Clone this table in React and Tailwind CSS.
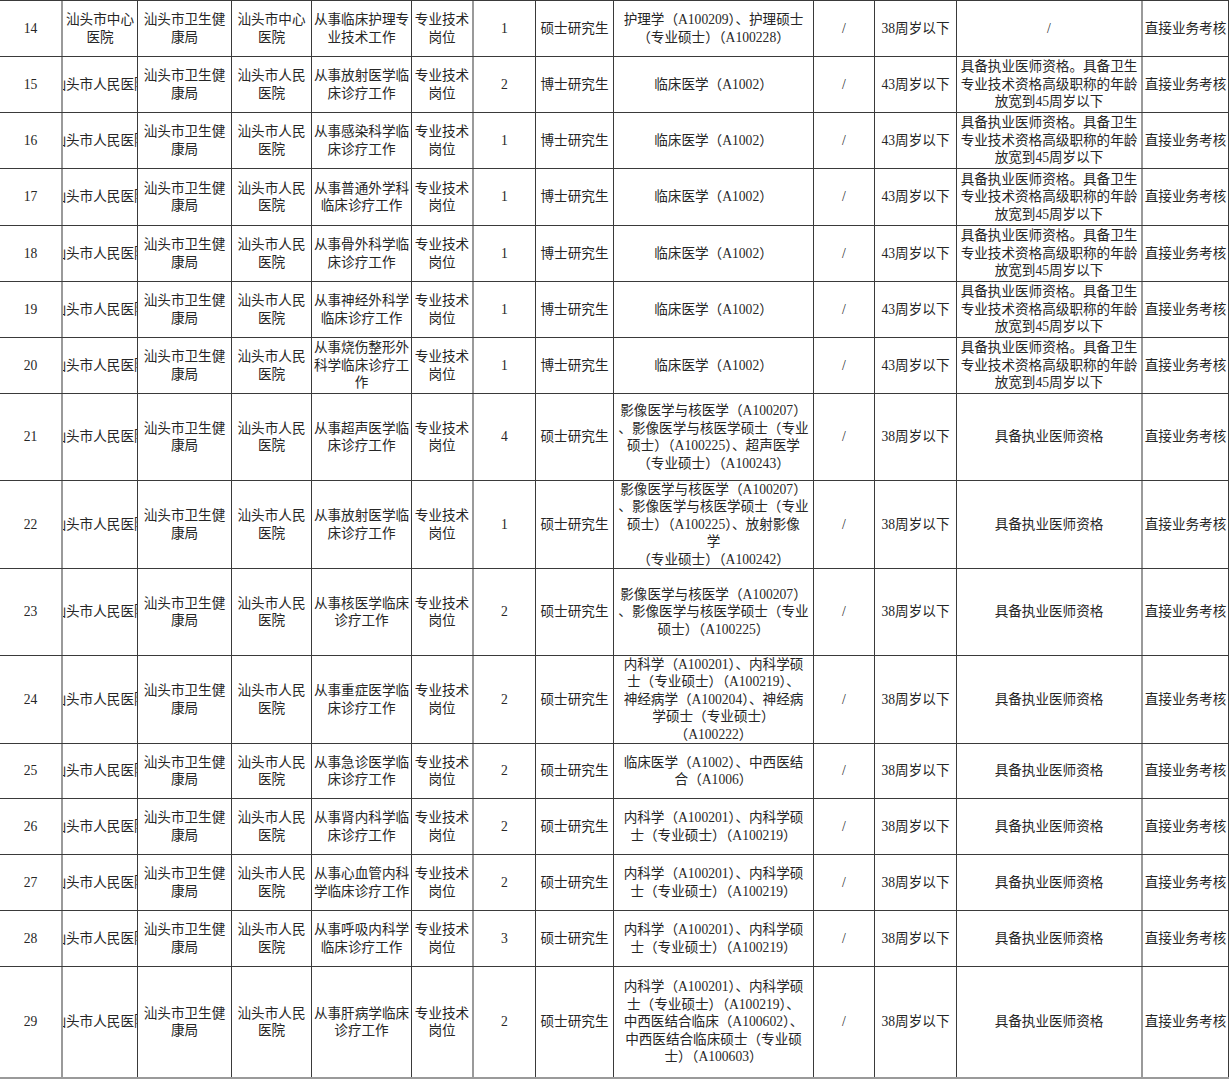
import React from "react";

const cols = [
  { w: "w-[63px]", line: "border-r-2 border-r-[#9a9a9a]" },
  { w: "w-[75px]", line: "border-r border-r-[#3a3a3a]" },
  { w: "w-[94px]", line: "border-r border-r-[#3a3a3a]" },
  { w: "w-[80px]", line: "border-r border-r-[#3a3a3a]" },
  { w: "w-[100px]", line: "border-r border-r-[#3a3a3a]" },
  { w: "w-[62px]", line: "border-r-2 border-r-[#9a9a9a]" },
  { w: "w-[62px]", line: "border-r border-r-[#3a3a3a]" },
  { w: "w-[78px]", line: "border-r border-r-[#3a3a3a]" },
  { w: "w-[200px]", line: "border-r border-r-[#3a3a3a]" },
  { w: "w-[61px]", line: "border-r border-r-[#3a3a3a]" },
  { w: "w-[82px]", line: "border-r border-r-[#3a3a3a]" },
  { w: "w-[186px]", line: "border-r-2 border-r-[#9a9a9a]" },
  { w: "w-[86px]", line: "border-r border-r-[#3a3a3a]" },
];

const senior = ["具备执业医师资格。具备卫生", "专业技术资格高级职称的年龄", "放宽到45周岁以下"];
const neike = ["内科学（A100201）、内科学硕", "士（专业硕士）（A100219）"];

const rows = [
  { no: 14, h: "h-[56px]", unit: ["汕头市中心", "医院"], hire: ["汕头市中心", "医院"], job: ["从事临床护理专", "业技术工作"], n: 1, edu: "硕士研究生", major: ["护理学（A100209）、护理硕士", "（专业硕士）（A100228）"], age: "38周岁以下", req: ["/"] },
  { no: 15, h: "h-[56px]", job: ["从事放射医学临", "床诊疗工作"], n: 2, edu: "博士研究生", major: ["临床医学（A1002）"], age: "43周岁以下", req: senior },
  { no: 16, h: "h-[56px]", job: ["从事感染科学临", "床诊疗工作"], n: 1, edu: "博士研究生", major: ["临床医学（A1002）"], age: "43周岁以下", req: senior },
  { no: 17, h: "h-[57px]", job: ["从事普通外学科", "临床诊疗工作"], n: 1, edu: "博士研究生", major: ["临床医学（A1002）"], age: "43周岁以下", req: senior },
  { no: 18, h: "h-[56px]", job: ["从事骨外科学临", "床诊疗工作"], n: 1, edu: "博士研究生", major: ["临床医学（A1002）"], age: "43周岁以下", req: senior },
  { no: 19, h: "h-[56px]", job: ["从事神经外科学", "临床诊疗工作"], n: 1, edu: "博士研究生", major: ["临床医学（A1002）"], age: "43周岁以下", req: senior },
  { no: 20, h: "h-[56px]", job: ["从事烧伤整形外", "科学临床诊疗工", "作"], n: 1, edu: "博士研究生", major: ["临床医学（A1002）"], age: "43周岁以下", req: senior },
  { no: 21, h: "h-[87px]", job: ["从事超声医学临", "床诊疗工作"], n: 4, edu: "硕士研究生", major: ["影像医学与核医学（A100207）", "、影像医学与核医学硕士（专业", "硕士）（A100225）、超声医学", "（专业硕士）（A100243）"], age: "38周岁以下", req: ["具备执业医师资格"] },
  { no: 22, h: "h-[88px]", job: ["从事放射医学临", "床诊疗工作"], n: 1, edu: "硕士研究生", major: ["影像医学与核医学（A100207）", "、影像医学与核医学硕士（专业", "硕士）（A100225）、放射影像", "学", "（专业硕士）（A100242）"], age: "38周岁以下", req: ["具备执业医师资格"] },
  { no: 23, h: "h-[87px]", job: ["从事核医学临床", "诊疗工作"], n: 2, edu: "硕士研究生", major: ["影像医学与核医学（A100207）", "、影像医学与核医学硕士（专业", "硕士）（A100225）"], age: "38周岁以下", req: ["具备执业医师资格"] },
  { no: 24, h: "h-[88px]", job: ["从事重症医学临", "床诊疗工作"], n: 2, edu: "硕士研究生", major: ["内科学（A100201）、内科学硕", "士（专业硕士）（A100219）、", "神经病学（A100204）、神经病", "学硕士（专业硕士）", "（A100222）"], age: "38周岁以下", req: ["具备执业医师资格"] },
  { no: 25, h: "h-[55px]", job: ["从事急诊医学临", "床诊疗工作"], n: 2, edu: "硕士研究生", major: ["临床医学（A1002）、中西医结", "合（A1006）"], age: "38周岁以下", req: ["具备执业医师资格"] },
  { no: 26, h: "h-[56px]", job: ["从事肾内科学临", "床诊疗工作"], n: 2, edu: "硕士研究生", major: neike, age: "38周岁以下", req: ["具备执业医师资格"] },
  { no: 27, h: "h-[56px]", job: ["从事心血管内科", "学临床诊疗工作"], n: 2, edu: "硕士研究生", major: neike, age: "38周岁以下", req: ["具备执业医师资格"] },
  { no: 28, h: "h-[56px]", job: ["从事呼吸内科学", "临床诊疗工作"], n: 3, edu: "硕士研究生", major: neike, age: "38周岁以下", req: ["具备执业医师资格"] },
  { no: 29, h: "h-[112px]", last: true, job: ["从事肝病学临床", "诊疗工作"], n: 2, edu: "硕士研究生", major: ["内科学（A100201）、内科学硕", "士（专业硕士）（A100219）、", "中西医结合临床（A100602）、", "中西医结合临床硕士（专业硕", "士）（A100603）"], age: "38周岁以下", req: ["具备执业医师资格"] },
];

function Cell({ col, lines }) {
  return (
    <div className={`${cols[col].w} ${cols[col].line} flex shrink-0 flex-col items-center justify-center overflow-hidden`}>
      {lines.map((t, i) => (
        <div key={i} className="whitespace-nowrap">
          {t}
        </div>
      ))}
    </div>
  );
}

function Row({ r }) {
  const bottom = r.last ? "border-b-2 border-b-[#9a9a9a]" : "border-b border-b-[#3a3a3a]";
  return (
    <div className={`flex ${r.h} ${bottom}`}>
      <Cell col={0} lines={[String(r.no)]} />
      {r.unit ? (
        <Cell col={1} lines={r.unit} />
      ) : (
        <Cell col={1} lines={["汕头市人民医院"]} />
      )}
      <Cell col={2} lines={["汕头市卫生健", "康局"]} />
      <Cell col={3} lines={r.hire || ["汕头市人民", "医院"]} />
      <Cell col={4} lines={r.job} />
      <Cell col={5} lines={["专业技术", "岗位"]} />
      <Cell col={6} lines={[String(r.n)]} />
      <Cell col={7} lines={[r.edu]} />
      <Cell col={8} lines={r.major} />
      <Cell col={9} lines={["/"]} />
      <Cell col={10} lines={[r.age]} />
      <Cell col={11} lines={r.req} />
      <Cell col={12} lines={["直接业务考核"]} />
    </div>
  );
}

export default function App() {
  return (
    <div className="h-[1080px] w-[1229px] overflow-hidden bg-white text-[13.6px] leading-[17.5px] text-[#262626] [font-family:'Liberation_Serif','Noto_Sans_CJK_SC',serif]">
      <div className="border-t border-t-[#3a3a3a]">
        {rows.map((r) => (
          <Row key={r.no} r={r} />
        ))}
      </div>
    </div>
  );
}
